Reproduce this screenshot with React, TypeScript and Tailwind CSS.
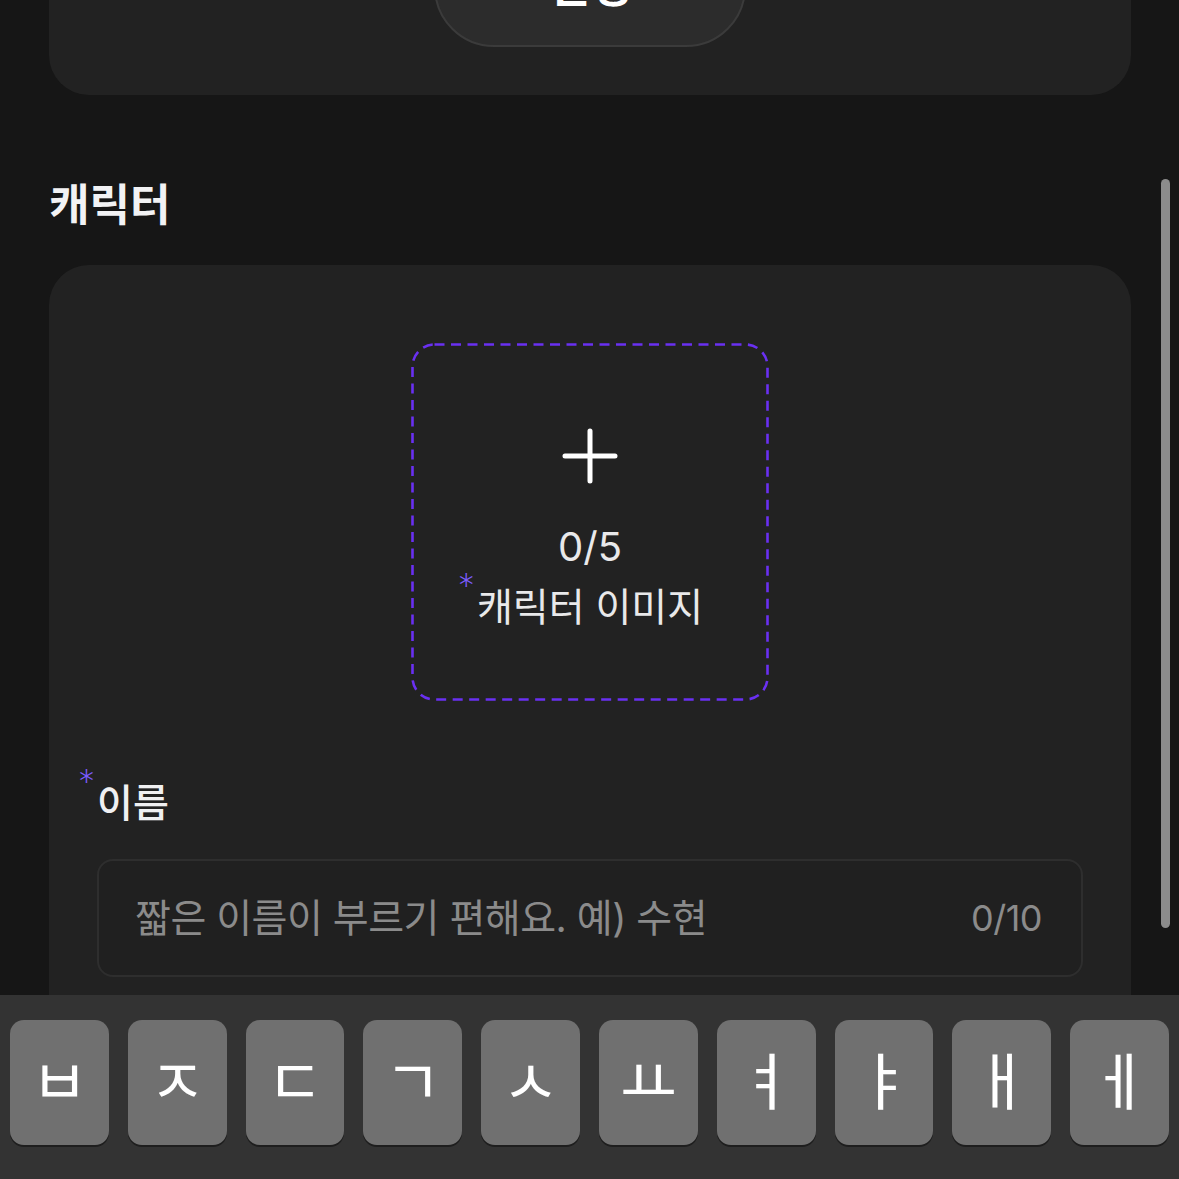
const FONT = 'font-["Inter","Noto_Sans_CJK_KR",sans-serif]'

const KEYS = ['ㅂ', 'ㅈ', 'ㄷ', 'ㄱ', 'ㅅ', 'ㅛ', 'ㅕ', 'ㅑ', 'ㅐ', 'ㅔ']

// required-field marker, sits just above-left of the text
function Required({ children }: { children: React.ReactNode }) {
  return (
    <span className="relative inline-block">
      <span className="absolute right-full -top-[14px] mr-[2px] text-[34px] font-extralight leading-none text-[#7b5cff]">
        *
      </span>
      {children}
    </span>
  )
}

function PlusIcon() {
  return (
    <svg width="56" height="56" viewBox="0 0 56 56" fill="none">
      <path d="M28 3v50M3 28h50" stroke="#ffffff" strokeWidth="5" strokeLinecap="round" />
    </svg>
  )
}

function ImageDrop() {
  return (
    <div className="relative flex h-[358px] w-[358px] flex-col items-center self-center pt-[85px]">
      <svg className="absolute inset-0" width="358" height="358" viewBox="0 0 358 358" fill="none">
        <rect
          x="1.5"
          y="1.5"
          width="355"
          height="355"
          rx="22"
          stroke="#6a30f2"
          strokeWidth="2.6"
          strokeDasharray="10 6.5"
        />
      </svg>
      <PlusIcon />
      <div className="mt-[39px] text-[40px] leading-[48px] text-[#e9e9ea]">0/5</div>
      <div className="mt-[12px] text-[39px] leading-[48px] text-[#e9e9ea]">
        <Required>캐릭터 이미지</Required>
      </div>
    </div>
  )
}

function NameField() {
  return (
    <div className="mt-[78px] flex flex-col">
      <div className="text-[39px] font-medium leading-[48px] text-[#f0f0f2]">
        <Required>이름</Required>
      </div>
      <div className="mt-[32px] flex h-[118px] items-center justify-between rounded-[16px] border-2 border-[#2e2e2e] bg-[#202020] pl-[36px] pr-[39px]">
        <span className="text-[39px] tracking-[-0.5px] text-[#8b8b8b]">
          짧은 이름이 부르기 편해요. 예) 수현
        </span>
        <span className="text-[36px] tracking-[-0.5px] text-[#8b8b8b]">0/10</span>
      </div>
    </div>
  )
}

function Keyboard() {
  return (
    <div className="absolute inset-x-0 bottom-0 h-[184px] bg-[#333333] px-[10px] pt-[25px]">
      <div className="flex gap-[19px]">
        {KEYS.map((k) => (
          <div
            key={k}
            className="flex h-[125px] w-[99px] items-center justify-center rounded-[14px] bg-[#707070] text-[62px] leading-none text-white shadow-[0_2px_0_#1e1e1e]"
          >
            {k}
          </div>
        ))}
      </div>
    </div>
  )
}

export default function App() {
  return (
    <div className={`relative h-[1179px] w-[1179px] overflow-hidden bg-[#161616] ${FONT}`}>
      <div className="flex flex-col pl-[49px] pr-[48px]">
        <div className="-mt-[105px] flex h-[200px] items-end justify-center rounded-[40px] bg-[#222222] pb-[48px]">
          <button className="flex h-[124px] w-[312px] items-center justify-center rounded-[60px] border-2 border-[#3b3b3b] bg-[#2c2c2c] text-[46px] font-bold text-white">
            변경
          </button>
        </div>

        <h1 className="mt-[88px] text-[44px] font-bold leading-[44px] text-[#f2f2f4]">캐릭터</h1>

        <div className="mt-[38px] flex h-[1000px] flex-col rounded-[40px] bg-[#222222] px-[48px] pt-[78px]">
          <ImageDrop />
          <NameField />
        </div>
      </div>

      <div className="absolute left-[1161px] top-[179px] h-[749px] w-[9px] rounded-full bg-[#8c8c8c]" />

      <Keyboard />
    </div>
  )
}
